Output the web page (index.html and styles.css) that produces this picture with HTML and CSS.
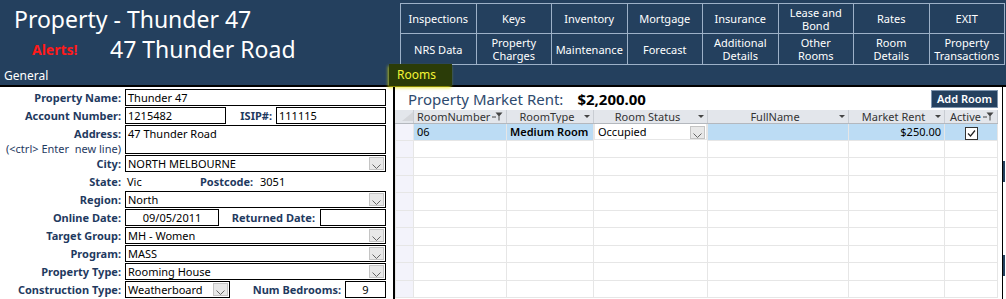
FILE: index.html
```html
<!DOCTYPE html>
<html lang="en">

<head>
    <meta charset="UTF-8">
    <meta name="viewport" content="width=device-width, initial-scale=1.0">
    <title>Property - Thunder 47</title>
    <link rel="stylesheet" href="styles.css">
</head>

<body>

    <header class="top">
        <div class="brand">
            <div class="title">Property - Thunder 47</div>
            <div class="subtitle">
                <span class="alerts">Alerts!</span>
                <span class="street">47 Thunder Road</span>
            </div>
            <div class="tab-general">General</div>
        </div>
        <div class="nav-area">
            <nav class="nav">
                <div class="nav-btn">Inspections</div>
                <div class="nav-btn">Keys</div>
                <div class="nav-btn">Inventory</div>
                <div class="nav-btn">Mortgage</div>
                <div class="nav-btn">Insurance</div>
                <div class="nav-btn">Lease and<br>Bond</div>
                <div class="nav-btn">Rates</div>
                <div class="nav-btn">EXIT</div>
                <div class="nav-btn">NRS Data</div>
                <div class="nav-btn">Property<br>Charges</div>
                <div class="nav-btn">Maintenance</div>
                <div class="nav-btn">Forecast</div>
                <div class="nav-btn">Additional<br>Details</div>
                <div class="nav-btn">Other<br>Rooms</div>
                <div class="nav-btn">Room<br>Details</div>
                <div class="nav-btn">Property<br>Transactions</div>
            </nav>
            <div class="tab-rooms">Rooms</div>
        </div>
    </header>

    <main class="content">
        <section class="form">
            <div class="row">
                <div class="lbl">Property Name:</div>
                <div class="box w-full">Thunder 47</div>
            </div>
            <div class="row">
                <div class="lbl">Account Number:</div>
                <div class="box w-acc">1215482</div>
                <div class="lbl lbl-isip">ISIP#:</div>
                <div class="box w-isip">111115</div>
            </div>
            <div class="row row-address">
                <div class="lbl lbl-stack">
                    <span>Address:</span>
                    <span class="hint">(&lt;ctrl&gt; Enter&nbsp; new line)</span>
                </div>
                <div class="box w-full box-tall">47 Thunder Road</div>
            </div>
            <div class="row">
                <div class="lbl">City:</div>
                <div class="box combo w-full"><span>NORTH MELBOURNE</span><span class="drop"></span></div>
            </div>
            <div class="row">
                <div class="lbl">State:</div>
                <div class="plain w-state">Vic</div>
                <div class="lbl lbl-post">Postcode:</div>
                <div class="plain">3051</div>
            </div>
            <div class="row">
                <div class="lbl">Region:</div>
                <div class="box combo w-full"><span>North</span><span class="drop"></span></div>
            </div>
            <div class="row">
                <div class="lbl">Online Date:</div>
                <div class="box w-date center">09/05/2011</div>
                <div class="lbl lbl-ret">Returned Date:</div>
                <div class="box w-ret"></div>
            </div>
            <div class="row">
                <div class="lbl">Target Group:</div>
                <div class="box combo w-full"><span>MH - Women</span><span class="drop"></span></div>
            </div>
            <div class="row">
                <div class="lbl">Program:</div>
                <div class="box combo w-full"><span>MASS</span><span class="drop"></span></div>
            </div>
            <div class="row">
                <div class="lbl">Property Type:</div>
                <div class="box combo w-full"><span>Rooming House</span><span class="drop"></span></div>
            </div>
            <div class="row">
                <div class="lbl">Construction Type:</div>
                <div class="box combo w-cons"><span>Weatherboard</span><span class="drop"></span></div>
                <div class="lbl lbl-beds">Num Bedrooms:</div>
                <div class="box w-beds center">9</div>
            </div>
        </section>

        <section class="rooms">
            <div class="rent-bar">
                <span class="rent-title">Property Market Rent:</span>
                <span class="rent-value">$2,200.00</span>
                <button class="add-btn">Add Room</button>
            </div>
            <table class="sheet">
                <colgroup>
                    <col style="width:18px">
                    <col style="width:93px">
                    <col style="width:87px">
                    <col style="width:114px">
                    <col style="width:141px">
                    <col style="width:96px">
                    <col style="width:53px">
                </colgroup>
                <tr class="head">
                    <th class="sel"><svg width="11" height="9" viewBox="0 0 11 9"><polygon points="0,9 11,0 11,9" fill="#d4d6da"/></svg></th>
                    <th><div class="th left"><span>RoomNumber</span><i class="filter"></i></div></th>
                    <th><div class="th"><span>RoomType</span><i class="sort"></i></div></th>
                    <th><div class="th"><span>Room Status</span><i class="sort"></i></div></th>
                    <th><div class="th"><span>FullName</span><i class="sort"></i></div></th>
                    <th><div class="th"><span>Market Rent</span><i class="sort"></i></div></th>
                    <th><div class="th"><span>Active</span><i class="filter"></i></div></th>
                </tr>
                <tr class="data">
                    <td class="sel"></td>
                    <td>06</td>
                    <td class="strong">Medium Room</td>
                    <td class="editing"><span>Occupied</span><span class="drop"></span></td>
                    <td></td>
                    <td class="num">$250.00</td>
                    <td class="chk"><span class="checkbox"></span></td>
                </tr>
            </table>
            <table class="sheet blank" id="blankRows">
                <colgroup>
                    <col style="width:18px">
                    <col style="width:93px">
                    <col style="width:87px">
                    <col style="width:114px">
                    <col style="width:141px">
                    <col style="width:96px">
                    <col style="width:53px">
                </colgroup>
            </table>
        </section>
        <div class="edge">
            <span class="edge-mark first"></span>
            <span class="edge-mark second"></span>
        </div>
    </main>

    <script>
        let blank = document.getElementById("blankRows");
        for (let i = 0; i < 9; i++) {
            let row = blank.insertRow();
            row.innerHTML = `<td class="sel"></td><td></td><td></td><td></td><td></td><td></td><td></td>`;
        }
    </script>

</body>

</html>
```

FILE: styles.css
```css
body {
    margin: 0;
    width: 1006px;
    height: 299px;
    overflow: hidden;
    font-family: "Noto Sans", "Open Sans", sans-serif;
    background: white;
}

.top {
    display: flex;
    height: 85px;
    background: #24405e;
    border-bottom: 2px solid #000;
    color: white;
}

.brand {
    width: 389px;
    display: flex;
    flex-direction: column;
}

.title {
    font-size: 23px;
    line-height: 30px;
    padding: 4px 0 0 14px;
}

.subtitle {
    display: flex;
    align-items: center;
    height: 30px;
}

.alerts {
    width: 110px;
    flex-shrink: 0;
    padding-left: 32px;
    box-sizing: border-box;
    color: #ff1a1a;
    font-weight: 700;
    font-size: 14px;
}

.street {
    font-size: 23px;
}

.tab-general {
    font-size: 12px;
    padding: 3px 0 0 4px;
}

.nav-area {
    display: flex;
    flex-direction: column;
}

.nav {
    display: grid;
    grid-template-columns: repeat(8, 1fr);
    grid-template-rows: 29px 30px;
    gap: 1px;
    width: 603px;
    margin: 3px 0 0 11px;
    padding: 1px;
    background: #9db1c8;
}

.nav-btn {
    display: flex;
    align-items: center;
    justify-content: center;
    background: #24405e;
    font-size: 11px;
    line-height: 13px;
    text-align: center;
}

.tab-rooms {
    align-self: flex-start;
    margin-top: -1px;
    padding: 2px 16px 3px 8px;
    background: #2b3c08;
    color: #f4f436;
    font-size: 12px;
    box-shadow: -1px 2px 3px rgba(230, 230, 0, 0.7);
}

.content {
    display: flex;
    height: 212px;
}

/* left form */

.form {
    width: 393px;
    border-right: 2px solid #000;
    padding-top: 2px;
    font-size: 11px;
}

.row {
    display: flex;
    height: 18px;
}

.row-address {
    height: 30px;
}

.lbl {
    width: 125px;
    flex-shrink: 0;
    box-sizing: border-box;
    padding-right: 4px;
    text-align: right;
    font-weight: 700;
    color: #1f3a5f;
    line-height: 17px;
    white-space: nowrap;
}

.lbl-stack {
    display: flex;
    flex-direction: column;
    align-items: flex-end;
}

.hint {
    font-weight: 400;
    line-height: 12px;
    margin-top: 1px;
}

.lbl-isip {
    width: 50px;
}

.lbl-post {
    width: 50px;
    padding-right: 0;
}

.lbl-ret {
    width: 101px;
    padding-right: 5px;
}

.lbl-beds {
    width: 115px;
}

.plain {
    line-height: 17px;
    padding-left: 2px;
}

.w-state {
    width: 75px;
    box-sizing: border-box;
}

.lbl-post + .plain {
    padding-left: 10px;
}

.box {
    height: 17px;
    box-sizing: border-box;
    border: 1px solid #000;
    line-height: 15px;
    padding-left: 2px;
    white-space: nowrap;
    overflow: hidden;
}

.box-tall {
    height: 29px;
}

.center {
    text-align: center;
    padding-left: 0;
}

.w-full {
    width: 261px;
}

.w-acc {
    width: 101px;
}

.w-isip {
    width: 110px;
}

.w-date {
    width: 94px;
}

.w-ret {
    width: 66px;
}

.w-cons {
    width: 105px;
}

.w-beds {
    width: 41px;
}

.combo {
    display: flex;
    justify-content: space-between;
    padding-right: 1px;
}

.drop {
    width: 15px;
    height: 13px;
    margin-top: 1px;
    box-sizing: border-box;
    border: 1px solid #c4c4c4;
    background: #e8e8e8 url("data:image/svg+xml,%3Csvg xmlns='http://www.w3.org/2000/svg' width='9' height='5'%3E%3Cpolyline points='0.5,0.5 4.5,4.5 8.5,0.5' fill='none' stroke='%23666'/%3E%3C/svg%3E") no-repeat center 6px;
    flex-shrink: 0;
}

/* rooms panel */

.rooms {
    width: 607px;
    border-right: 1px solid #000;
}

.rent-bar {
    display: flex;
    align-items: center;
    height: 23px;
    padding-left: 13px;
}

.rent-title {
    font-size: 15px;
    color: #2e4a6e;
}

.rent-value {
    margin-left: 14px;
    font-size: 15px;
    font-weight: 700;
}

.add-btn {
    margin-left: auto;
    margin-right: 4px;
    width: 67px;
    height: 18px;
    padding: 0;
    background: #24405e;
    border: 1px solid #7f95ad;
    color: white;
    font-family: inherit;
    font-size: 11px;
    font-weight: 600;
}

.sheet {
    table-layout: fixed;
    border-collapse: collapse;
    width: 602px;
    font-size: 11px;
}

.sheet td,
.sheet th {
    padding: 0;
    border: 1px solid #e6e6e6;
    border-top: none;
    white-space: nowrap;
    overflow: hidden;
}

.head th {
    height: 13px;
    background: #e3e6eb;
    border-right: 1px solid #c9cdd3;
    border-bottom: 1px solid #b4b8be;
    font-weight: 400;
    color: #333;
    line-height: 13px;
}

.head th.sel {
    text-align: right;
    vertical-align: bottom;
}

.th {
    display: flex;
    align-items: center;
    padding: 0 3px;
}

.th span {
    flex: 1;
    text-align: center;
}

.th.left span {
    text-align: left;
}

.sort {
    width: 6px;
    height: 3px;
    background: #444;
    clip-path: polygon(0 0, 100% 0, 50% 100%);
}

.filter {
    width: 11px;
    height: 9px;
    background: url("data:image/svg+xml,%3Csvg xmlns='http://www.w3.org/2000/svg' width='11' height='9'%3E%3Cpolygon points='3.5,0.5 10.5,0.5 7.5,4 7.5,8.5 6.5,8.5 6.5,4' fill='%23444'/%3E%3Cline x1='0' y1='5' x2='4' y2='5' stroke='%23444'/%3E%3C/svg%3E") no-repeat;
}

.sheet td.sel {
    background: #f3f3fb;
}

.data td {
    height: 15px;
    background: #bcdcf4;
    padding: 0 3px;
    line-height: 15px;
}

.data td.sel {
    background: #f3f3fb;
}

.data td.strong {
    font-weight: 600;
}

.data td.editing {
    background: white;
    display: flex;
    justify-content: space-between;
    align-items: center;
    padding-right: 1px;
}

.data td.num {
    text-align: right;
}

.data td.chk {
    text-align: center;
}

.checkbox {
    display: inline-block;
    width: 13px;
    height: 13px;
    box-sizing: border-box;
    border: 1px solid #333;
    background: white url("data:image/svg+xml,%3Csvg xmlns='http://www.w3.org/2000/svg' width='11' height='11'%3E%3Cpolyline points='2,5.5 4.5,8 9,2.5' fill='none' stroke='%23222' stroke-width='1.2'/%3E%3C/svg%3E") no-repeat center;
    vertical-align: middle;
}

.blank td {
    height: 16.5px;
}

.edge {
    width: 2px;
    display: flex;
    flex-direction: column;
}

.edge-mark {
    height: 21px;
    background: #24405e;
}

.edge-mark.first {
    margin-top: 74px;
}

.edge-mark.second {
    margin-top: 73px;
}
```
